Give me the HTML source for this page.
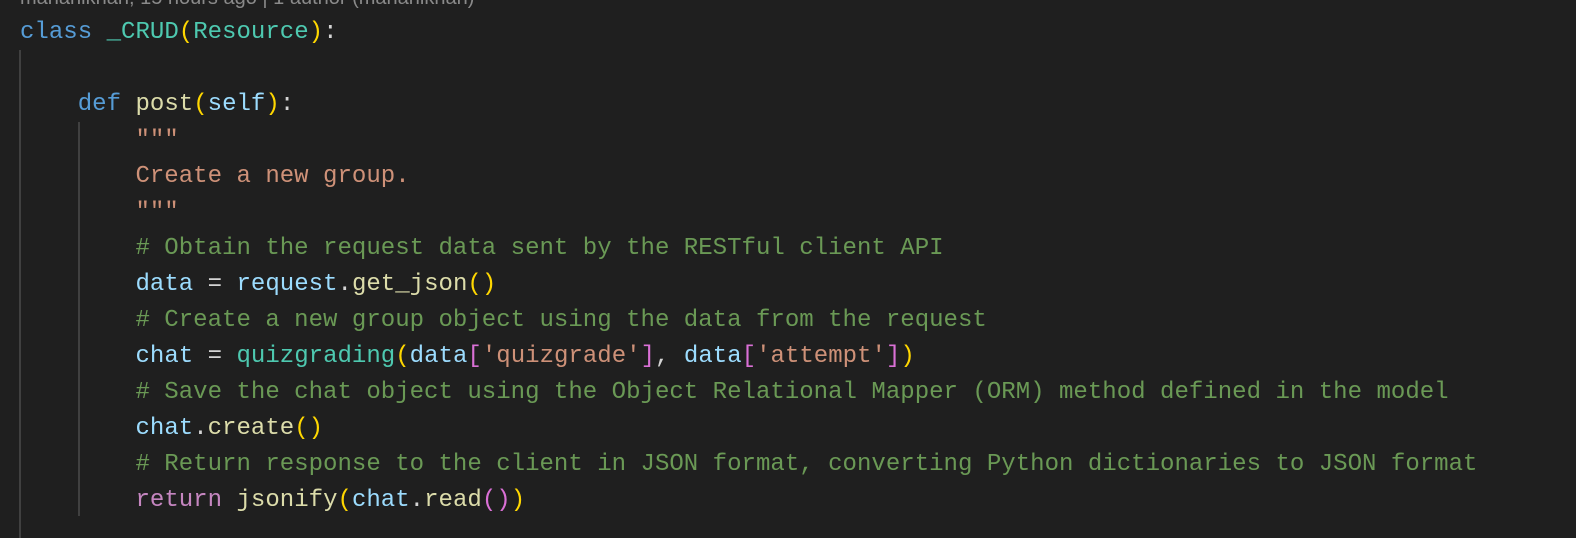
<!DOCTYPE html>
<html><head><meta charset="utf-8"><style>
html,body{margin:0;padding:0;background:#1f1f1f;width:1576px;height:538px;overflow:hidden;position:relative}
.l{position:absolute;left:20px;height:36px;line-height:36px;font-family:"Liberation Mono",monospace;font-size:24.05px;color:#d4d4d4;white-space:pre}
.k{color:#569cd6}.c{color:#4ec9b0}.y{color:#ffd700}.f{color:#dcdcaa}.v{color:#9cdcfe}.s{color:#ce9178}.m{color:#6a9955}.p{color:#da70d6}.r{color:#c586c0}.b{color:#179fff}
.g{position:absolute;width:2px;background:#404040}
.blame{position:absolute;left:20px;top:-13px;font-family:"Liberation Sans",sans-serif;font-size:20px;color:#8a8a8a;white-space:pre}
</style></head><body>
<div class="blame">mahahikhan, 15 hours ago | 1 author (mahahikhan)</div>
<div class="g" style="left:19px;top:50px;height:488px"></div>
<div class="g" style="left:78px;top:122px;height:394px"></div>
<div class="l" style="top:15px"><span class="k">class</span> <span class="c">_CRUD</span><span class="y">(</span><span class="c">Resource</span><span class="y">)</span>:</div>
<div class="l" style="top:87px">    <span class="k">def</span> <span class="f">post</span><span class="y">(</span><span class="v">self</span><span class="y">)</span>:</div>
<div class="l s" style="top:123px">        """</div>
<div class="l s" style="top:159px">        Create a new group.</div>
<div class="l s" style="top:195px">        """</div>
<div class="l m" style="top:231px">        # Obtain the request data sent by the RESTful client API</div>
<div class="l" style="top:267px">        <span class="v">data</span> = <span class="v">request</span>.<span class="f">get_json</span><span class="y">()</span></div>
<div class="l m" style="top:303px">        # Create a new group object using the data from the request</div>
<div class="l" style="top:339px">        <span class="v">chat</span> = <span class="c">quizgrading</span><span class="y">(</span><span class="v">data</span><span class="p">[</span><span class="s">'quizgrade'</span><span class="p">]</span>, <span class="v">data</span><span class="p">[</span><span class="s">'attempt'</span><span class="p">]</span><span class="y">)</span></div>
<div class="l m" style="top:375px">        # Save the chat object using the Object Relational Mapper (ORM) method defined in the model</div>
<div class="l" style="top:411px">        <span class="v">chat</span>.<span class="f">create</span><span class="y">()</span></div>
<div class="l m" style="top:447px">        # Return response to the client in JSON format, converting Python dictionaries to JSON format</div>
<div class="l" style="top:483px">        <span class="r">return</span> <span class="f">jsonify</span><span class="y">(</span><span class="v">chat</span>.<span class="f">read</span><span class="p">()</span><span class="y">)</span></div>
</body></html>
